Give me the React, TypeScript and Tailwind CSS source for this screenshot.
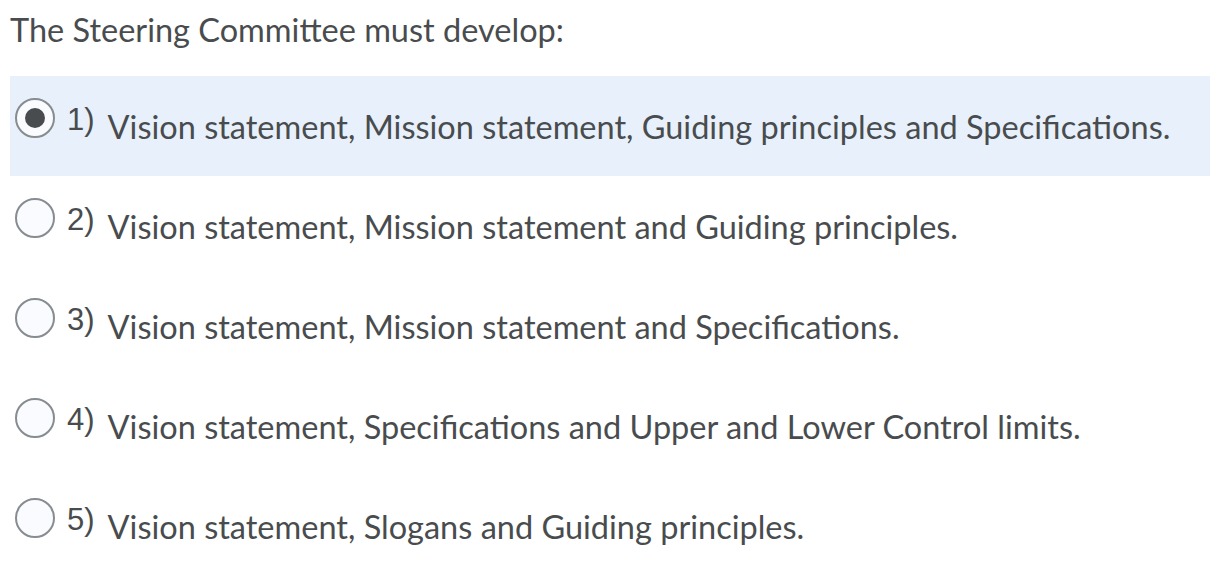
const options = [
  "Vision statement, Mission statement, Guiding principles and Specifications.",
  "Vision statement, Mission statement and Guiding principles.",
  "Vision statement, Mission statement and Specifications.",
  "Vision statement, Specifications and Upper and Lower Control limits.",
  "Vision statement, Slogans and Guiding principles.",
];

const Radio = ({ checked }: { checked: boolean }) => (
  <span className="mt-[22px] flex h-[40px] w-[40px] shrink-0 items-center justify-center rounded-full border-2 border-[#868c8f] bg-[#f9fbff]">
    {checked && <span className="h-[20px] w-[20px] rounded-full bg-[#494c4e]" />}
  </span>
);

export default function App() {
  return (
    <div className="h-[564px] w-[1210px] bg-white text-[#494c4e] font-['Lato','Noto_Sans',sans-serif]">
      <div className="h-[76px] pl-[10px] pt-[10px] text-[32.5px] leading-[40px]">
        The Steering Committee must develop:
      </div>
      <div className="flex flex-col pl-[10px]">
        {options.map((text, i) => (
          <div
            key={i}
            className={`flex h-[100px] items-start pl-[5px] ${i === 0 ? "bg-[#e8f1fb]" : ""}`}
          >
            <Radio checked={i === 0} />
            <span className="ml-[12px] mt-[28px] font-['Liberation_Sans',sans-serif] text-[31px] leading-[31px]">
              {i + 1})
            </span>
            <span className="ml-[13px] mt-[31px] text-[32.5px] leading-[40px]">{text}</span>
          </div>
        ))}
      </div>
    </div>
  );
}
